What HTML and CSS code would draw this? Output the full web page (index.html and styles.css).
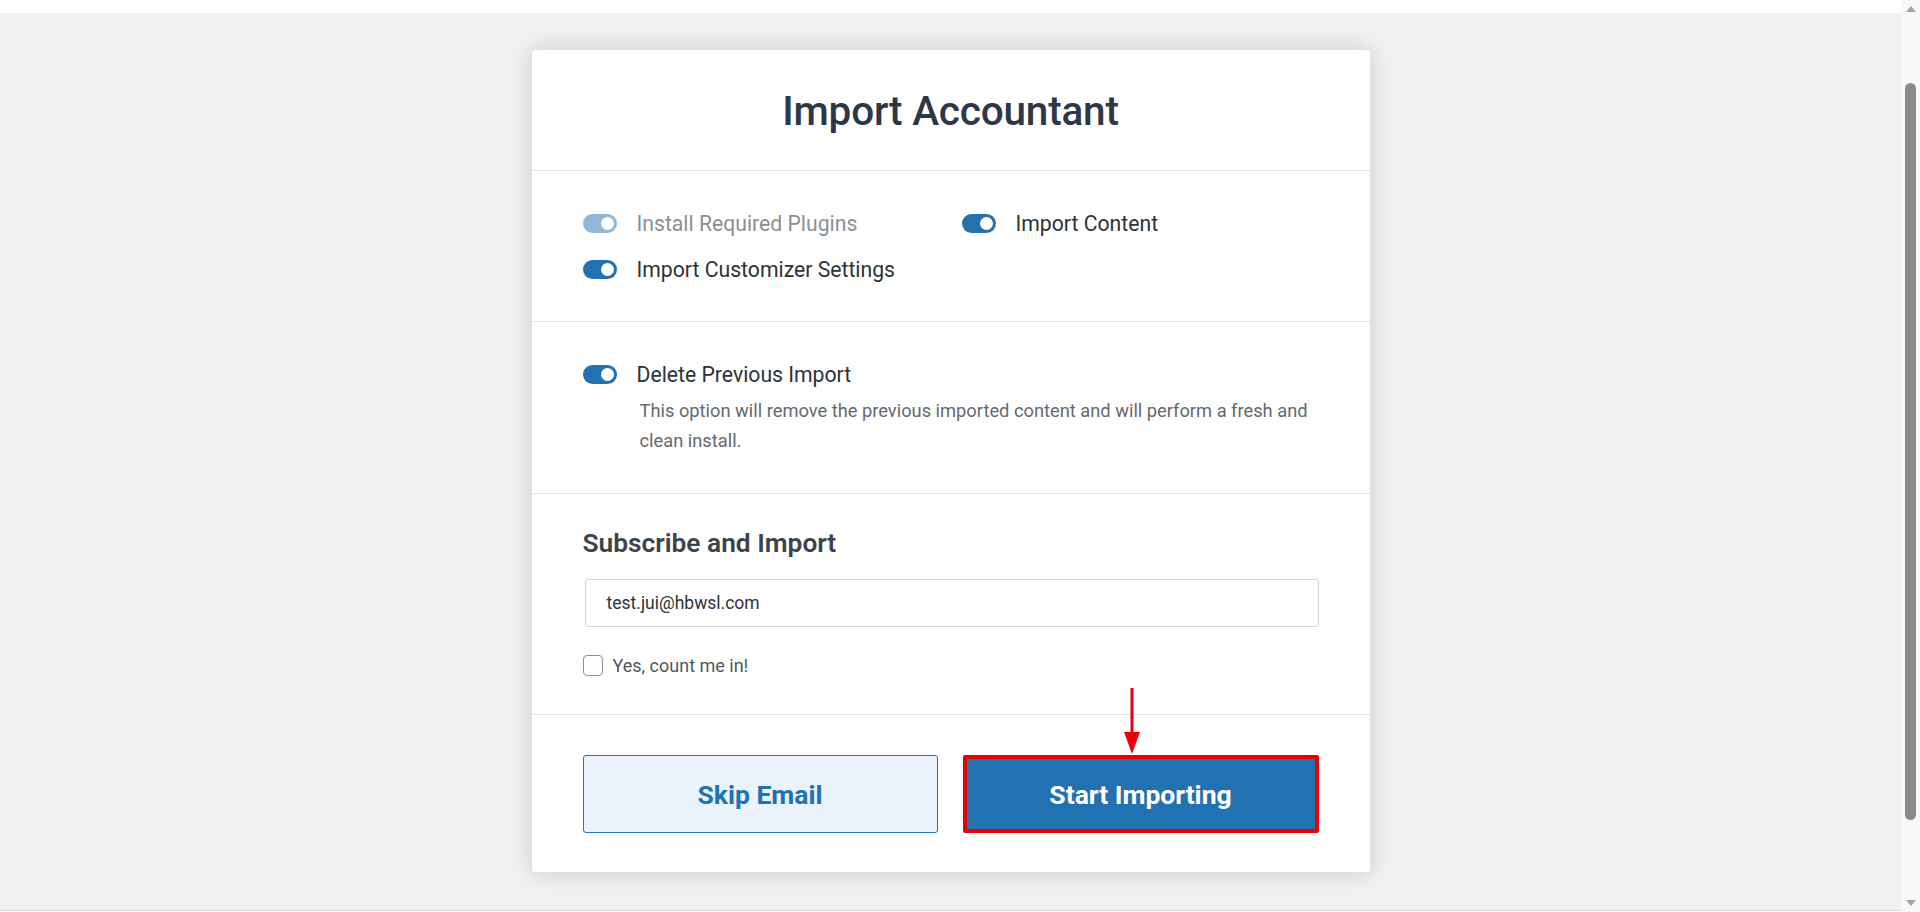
FILE: index.html
```html
<!DOCTYPE html>
<html lang="en">
<head>
<meta charset="utf-8">
<title>Import Accountant</title>
<link rel="stylesheet" href="styles.css">
</head>
<body>
<div class="window">
  <div class="page">
    <div class="topstrip"></div>
    <main class="stage">
      <section class="card">
        <header class="card-head">
          <h1 class="title">Import Accountant</h1>
        </header>

        <div class="card-sec options">
          <label class="opt disabled"><span class="toggle on"></span><span class="opt-label">Install Required Plugins</span></label>
          <label class="opt"><span class="toggle on"></span><span class="opt-label">Import Content</span></label>
          <label class="opt"><span class="toggle on"></span><span class="opt-label">Import Customizer Settings</span></label>
        </div>

        <div class="card-sec">
          <label class="opt"><span class="toggle on"></span><span class="opt-label">Delete Previous Import</span></label>
          <p class="desc">This option will remove the previous imported content and will perform a fresh and clean install.</p>
        </div>

        <div class="card-sec subscribe">
          <h2 class="sub-title">Subscribe and Import</h2>
          <div class="input">test.jui@hbwsl.com</div>
          <label class="check"><span class="box"></span><span>Yes, count me in!</span></label>
        </div>

        <div class="card-sec actions">
          <button class="btn btn-ghost">Skip Email</button>
          <div class="btn-wrap">
            <button class="btn btn-primary">Start Importing</button>
            <div class="arrow">
              <svg width="16" height="66" viewBox="0 0 16 66"><line x1="8" y1="0" x2="8" y2="48" stroke="#e8000b" stroke-width="3"/><polygon points="0,44 16,44 8,66" fill="#e8000b"/></svg>
            </div>
          </div>
        </div>
      </section>
    </main>
    <div class="bottomline"></div>
  </div>
  <div class="scrollbar">
    <div class="sb-arrow up"></div>
    <div class="sb-track"><div class="sb-thumb"></div></div>
    <div class="sb-arrow down"></div>
  </div>
</div>
</body>
</html>
```

FILE: styles.css
```css
* { box-sizing: border-box; }
html, body { margin: 0; padding: 0; height: 100%; overflow: hidden; }
body {
  font-family: Roboto, "Liberation Sans", sans-serif;
  color: #2c3338;
  background: #f0f0f0;
}
.window { display: flex; height: 912px; }
.page { flex: 1; display: flex; flex-direction: column; min-width: 0; }
.topstrip { height: 13px; background: #ffffff; }
.stage {
  flex: 1;
  background: #f0f0f0;
  display: flex;
  justify-content: center;
  align-items: flex-start;
  padding-top: 37px;
}
.bottomline { height: 2px; background: #fafafa; border-top: 1px solid #d6d6d6; }

.card {
  width: 838px;
  background: #fff;
  border-radius: 3px;
  box-shadow: 0 0 22px rgba(0,0,0,0.16);
}
.card-head { padding: 37px 50px 35px; text-align: center; border-bottom: 1px solid #e2e4e7; }
.title {
  margin: 0;
  font-size: 40.5px;
  line-height: 48px;
  font-weight: 500;
  color: #2d3748;
  letter-spacing: -0.2px;
}
.card-sec { padding: 38px 51px 38px; border-bottom: 1px solid #e2e4e7; }
.card-sec:last-child { border-bottom: 0; }

.options {
  display: grid;
  grid-template-columns: 379px 1fr;
  row-gap: 18px;
}
.opt { display: flex; align-items: center; gap: 20px; height: 28px; }
.opt-label { font-size: 21.2px; color: #2c3338; }
.opt.disabled .opt-label { color: #8c8f94; }
.toggle {
  position: relative;
  width: 34px;
  height: 19px;
  border-radius: 10px;
  background: #2271b1;
  flex: none;
}
.toggle::after {
  content: "";
  position: absolute;
  right: 3px;
  top: 3px;
  width: 13px;
  height: 13px;
  border-radius: 50%;
  background: #fff;
}
.opt.disabled .toggle { background: #91b8da; }

.desc {
  margin: 8px -6px 0 57px;
  font-size: 18.3px;
  line-height: 29.5px;
  color: #646970;
}

.subscribe { padding-top: 33px; }
.sub-title { margin: 0; font-size: 26.3px; line-height: 32px; font-weight: 600; color: #3c434a; }
.input {
  margin: 20px 0 0 2px;
  height: 48px;
  border: 1px solid #cfd2d6;
  border-radius: 3px;
  padding: 0 21px;
  display: flex;
  align-items: center;
  font-size: 17.5px;
  color: #2c3338;
}
.check { display: flex; align-items: center; gap: 10px; margin-top: 28px; font-size: 18px; color: #50575e; }
.box {
  width: 20px; height: 21px;
  border: 1.5px solid #8c8f94;
  border-radius: 4px;
  background: #fff;
}

.actions { display: grid; grid-template-columns: 355px 1fr; column-gap: 25px; padding-top: 40px; padding-bottom: 39px; }
.btn {
  font-family: Roboto, "Liberation Sans", sans-serif;
  font-size: 26.5px;
  font-weight: 700;
  height: 78px;
  border-radius: 3px;
  width: 100%;
  cursor: pointer;
}
.btn-ghost { background: #eaf2fb; color: #2271b1; border: 1px solid #2271b1; }
.btn-wrap { position: relative; }
.btn-primary {
  background: #2271b1;
  color: #fff;
  border: 4px solid #e8000b;
  border-radius: 2px;
}
.arrow { position: absolute; left: 161px; top: -67px; width: 16px; height: 66px; }
.arrow svg { display: block; }

.scrollbar {
  width: 19px;
  background: #f8f8f8;
  display: flex;
  flex-direction: column;
  align-items: center;
}
.sb-arrow { width: 0; height: 0; border-left: 5px solid transparent; border-right: 5px solid transparent; }
.sb-arrow.up { border-bottom: 6px solid #a3a3a3; margin-top: 6px; }
.sb-arrow.down { border-top: 6px solid #a3a3a3; margin-bottom: 6px; }
.sb-track { flex: 1; width: 100%; display: flex; justify-content: center; padding-top: 71px; padding-bottom: 80px; }
.sb-thumb { width: 11px; background: #8b8b8b; border-radius: 6px; flex: none; height: 100%; }
```
